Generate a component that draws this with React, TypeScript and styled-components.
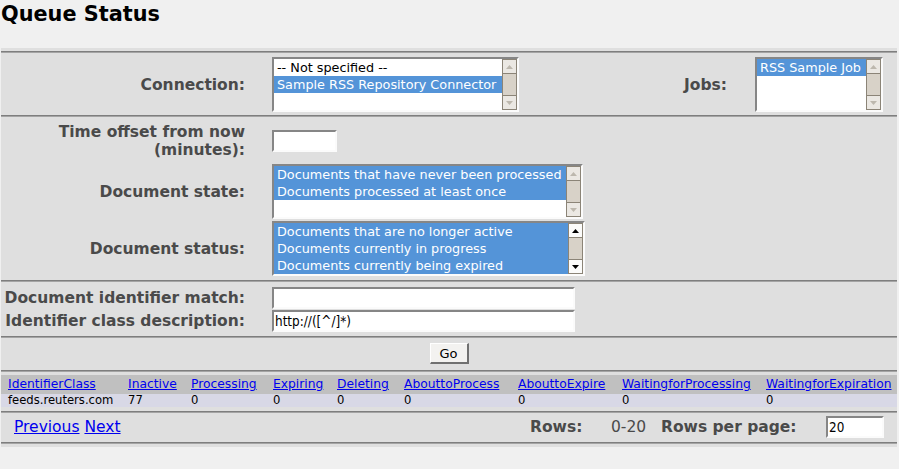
import React from 'react';
import styled, { createGlobalStyle } from 'styled-components';

const GlobalStyle = createGlobalStyle`
  html, body {
    margin: 0;
    padding: 0;
    background: #f0f0f0;
  }
  body {
    font-family: "DejaVu Sans", Verdana, sans-serif;
  }
`;

const Page = styled.div`
  padding: 3px 2px 0 1px;
`;

const Title = styled.h1`
  margin: 0 0 22px 0;
  font-size: 20.8px;
  line-height: 23px;
  font-weight: bold;
  color: #000;
`;

const Frame = styled.div`
  width: 896px;
  box-sizing: border-box;
  padding: 3px 0;
  background: #dfdfdf;
`;

const Separator = styled.div`
  height: 2px;
  box-sizing: border-box;
  border-top: 1px solid #7e7e7e;
  border-bottom: 1px solid #a4a4a4;
`;

const Section = styled.div<{ $pad: string; $cols?: string; $gap?: number }>`
  display: grid;
  grid-template-columns: ${p => p.$cols ?? '271px 1fr'};
  row-gap: ${p => p.$gap ?? 0}px;
  align-items: center;
  padding: ${p => p.$pad};
`;

const Label = styled.div<{ $pr?: number }>`
  text-align: right;
  padding-right: ${p => p.$pr ?? 27}px;
  padding-left: 2px;
  font-size: 15.5px;
  line-height: 18px;
  font-weight: bold;
  color: #4a4a4a;
  white-space: nowrap;
`;

const Field = styled.div<{ $h?: number }>`
  display: flex;
  align-items: center;
  min-height: ${p => p.$h ?? 0}px;
`;

// listbox, drawn by hand so the gtk style scrollbar matches
const ListFrame = styled.div<{ $w: number }>`
  display: flex;
  width: ${p => p.$w}px;
  height: 55px;
  box-sizing: border-box;
  border-style: solid;
  border-width: 2px;
  border-color: #868686 #fbfbfb #fbfbfb #868686;
  background: #fff;
`;

const OptionList = styled.div`
  flex: 1;
  overflow: hidden;
`;

const OptionRow = styled.div<{ $selected?: boolean }>`
  height: 17px;
  line-height: 17px;
  padding-left: 3px;
  font-size: 12.8px;
  white-space: nowrap;
  color: ${p => (p.$selected ? '#fff' : '#000')};
  background: ${p => (p.$selected ? '#5494d8' : 'transparent')};
`;

const ScrollTrack = styled.div`
  width: 15px;
  display: flex;
  flex-direction: column;
  box-sizing: border-box;
  border: 1px solid #8b8477;
  background: #d8d2c8;
`;

const ScrollArrow = styled.div<{ $enabled?: boolean }>`
  height: 13px;
  display: flex;
  align-items: center;
  justify-content: center;
  background: ${p => (p.$enabled ? '#fbfbfa' : '#ebe8e3')};
`;

const Thumb = styled.div`
  flex: 1;
  border-top: 1px solid #8b8477;
  border-bottom: 1px solid #8b8477;
  background: #d8d2c8;
`;

const Arrow = ({ up, enabled }: { up?: boolean; enabled?: boolean }) => (
  <svg width="9" height="6" viewBox="0 0 9 6">
    <polygon
      points={up ? '1,5 4.5,1 8,5' : '1,1 4.5,5 8,1'}
      fill={enabled ? '#000' : '#bdb8ae'}
    />
  </svg>
);

interface ListOption {
  label: string;
  selected?: boolean;
}

interface ListBoxProps {
  width: number;
  options: ListOption[];
  scrollable?: boolean;
}

function ListBox({ width, options, scrollable }: ListBoxProps) {
  return (
    <ListFrame $w={width}>
      <OptionList>
        {options.map((o, i) => (
          <OptionRow key={o.label + '_' + i} $selected={o.selected}>{o.label}</OptionRow>
        ))}
      </OptionList>
      <ScrollTrack>
        <ScrollArrow $enabled={scrollable}><Arrow up enabled={scrollable} /></ScrollArrow>
        <Thumb />
        <ScrollArrow $enabled={scrollable}><Arrow enabled={scrollable} /></ScrollArrow>
      </ScrollTrack>
    </ListFrame>
  );
}

const TextInput = styled.input<{ $w: number }>`
  width: ${p => p.$w}px;
  height: 22px;
  box-sizing: border-box;
  margin: 0;
  padding: 0 1px;
  border-style: solid;
  border-width: 2px;
  border-color: #868686 #fbfbfb #fbfbfb #868686;
  background: #fff;
  font-family: "DejaVu Sans Condensed", "DejaVu Sans", sans-serif;
  font-size: 13.4px;
  color: #000;
  outline: none;
`;

const ButtonRow = styled.div`
  display: flex;
  justify-content: center;
  padding: 5px 0 6px;
`;

const GoButton = styled.button`
  width: 39px;
  height: 21px;
  margin: 0;
  padding: 0;
  box-sizing: border-box;
  border-style: solid;
  border-width: 1px 2px 2px 1px;
  border-color: #fff #707070 #707070 #fff;
  background: #f3f2f0;
  font-family: "DejaVu Sans", sans-serif;
  font-size: 13px;
  color: #000;
`;

const ResultGrid = styled.div`
  display: grid;
  grid-template-columns: 120px 63px 82px 64px 67px 114px 104px 144px 138px;
  padding: 3px 0 4px;
`;

const HeadCell = styled.div`
  height: 19px;
  line-height: 19px;
  padding-left: 7px;
  background: #c0c0c0;
  font-size: 12.3px;
  white-space: nowrap;
`;

const HeadLink = styled.a`
  color: #0000ee;
  text-decoration: underline;
  cursor: pointer;
`;

const DataCell = styled.div`
  height: 13px;
  line-height: 13px;
  padding-left: 7px;
  background: #d8d8e6;
  font-size: 11.6px;
  color: #000;
  white-space: nowrap;
`;

const Footer = styled.div`
  display: grid;
  grid-template-columns: 1fr 81px 50px 165px 58px;
  align-items: center;
  padding: 3px 13px 4px 13px;
`;

const NavLinks = styled.div`
  font-size: 15.5px;
  line-height: 22px;
`;

const NavLink = styled.a`
  color: #0000ee;
  text-decoration: underline;
  cursor: pointer;
`;

const FootLabel = styled.div`
  font-size: 15.5px;
  font-weight: bold;
  color: #4a4a4a;
  white-space: nowrap;
`;

const FootValue = styled.div`
  font-size: 15.5px;
  color: #4a4a4a;
`;

const columns = [
  'IdentifierClass', 'Inactive', 'Processing', 'Expiring', 'Deleting',
  'AbouttoProcess', 'AbouttoExpire', 'WaitingforProcessing', 'WaitingforExpiration',
];

const rows = [
  ['feeds.reuters.com', '77', '0', '0', '0', '0', '0', '0', '0'],
];

export default function App() {
  return (
    <Page>
      <GlobalStyle />
      <Title>Queue Status</Title>
      <Frame>
        <Separator />
        <Section $pad="4px 0 3px" $cols="271px 1fr 183px 142px">
          <Label>Connection:</Label>
          <Field>
            <ListBox
              width={247}
              options={[
                { label: '-- Not specified --' },
                { label: 'Sample RSS Repository Connector', selected: true },
              ]}
            />
          </Field>
          <Label $pr={28}>Jobs:</Label>
          <Field>
            <ListBox width={128} options={[{ label: 'RSS Sample Job', selected: true }]} />
          </Field>
        </Section>
        <Separator />
        <Section $pad="3px 0 4px" $gap={2}>
          <Label>Time offset from now<br />(minutes):</Label>
          <Field $h={42}>
            <TextInput $w={65} type="text" />
          </Field>
          <Label>Document state:</Label>
          <Field>
            <ListBox
              width={311}
              options={[
                { label: 'Documents that have never been processed', selected: true },
                { label: 'Documents processed at least once', selected: true },
              ]}
            />
          </Field>
          <Label>Document status:</Label>
          <Field>
            <ListBox
              width={313}
              scrollable
              options={[
                { label: 'Documents that are no longer active', selected: true },
                { label: 'Documents currently in progress', selected: true },
                { label: 'Documents currently being expired', selected: true },
              ]}
            />
          </Field>
        </Section>
        <Separator />
        <Section $pad="5px 0 4px" $gap={1}>
          <Label>Document identifier match:</Label>
          <Field>
            <TextInput $w={303} type="text" />
          </Field>
          <Label>Identifier class description:</Label>
          <Field>
            <TextInput $w={303} type="text" defaultValue="http://([^/]*)" />
          </Field>
        </Section>
        <Separator />
        <ButtonRow>
          <GoButton>Go</GoButton>
        </ButtonRow>
        <Separator />
        <ResultGrid>
          {columns.map(c => (
            <HeadCell key={c}><HeadLink>{c}</HeadLink></HeadCell>
          ))}
          {rows.map((r, i) =>
            r.map((v, j) => <DataCell key={i + '_' + j}>{v}</DataCell>)
          )}
        </ResultGrid>
        <Separator />
        <Footer>
          <NavLinks>
            <NavLink>Previous</NavLink> <NavLink>Next</NavLink>
          </NavLinks>
          <FootLabel>Rows:</FootLabel>
          <FootValue>0-20</FootValue>
          <FootLabel>Rows per page:</FootLabel>
          <TextInput $w={58} type="text" defaultValue="20" />
        </Footer>
        <Separator />
      </Frame>
    </Page>
  );
}
